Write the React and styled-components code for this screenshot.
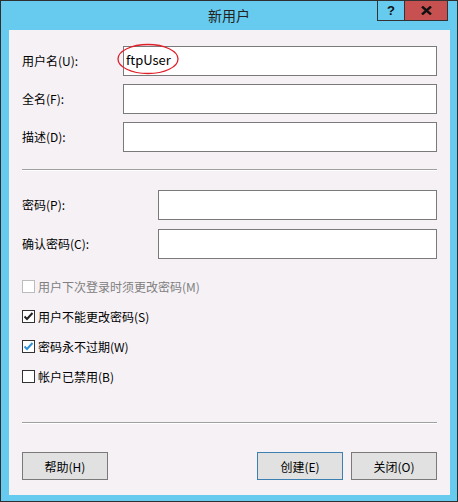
import React from 'react'
import styled, { createGlobalStyle } from 'styled-components'

const GlobalStyle = createGlobalStyle`
  html, body {
    margin: 0;
    padding: 0;
    background: #ffffff;
  }
  body {
    font-family: "Noto Sans CJK SC", "Liberation Sans", sans-serif;
  }
`

const Window = styled.div`
  width: 458px;
  height: 502px;
  box-sizing: border-box;
  border: 1px solid #2f2f2f;
  background: #66cbee;
  display: flex;
  flex-direction: column;
  font-family: "Noto Sans CJK SC", "Liberation Sans", sans-serif;
`

const TitleBar = styled.div`
  height: 29px;
  display: grid;
  grid-template-columns: 1fr auto 1fr;
  align-items: start;
`

const Title = styled.div`
  grid-column: 2;
  font-size: 14px;
  line-height: 29px;
  color: #222;
`

const CaptionButtons = styled.div`
  grid-column: 3;
  justify-self: end;
  display: flex;
  margin-right: 9px;
  margin-top: -1px;
`

const CaptionButton = styled.div`
  width: ${p => (p.$close ? '43px' : '28px')};
  height: 21px;
  box-sizing: border-box;
  border: 1px solid #333;
  border-left-width: ${p => (p.$close ? '0' : '1px')};
  background: ${p => (p.$close ? '#c75050' : '#66cbee')};
  display: flex;
  align-items: center;
  justify-content: center;
  font-family: "Liberation Sans", sans-serif;
  font-weight: bold;
  font-size: 13px;
  color: #111;
`

const Client = styled.div`
  flex: 1;
  margin: 0 7px 7px 8px;
  background: #f5f1f5;
  padding: 16px 13px 15px 13px;
  display: flex;
  flex-direction: column;
  font-size: 12px;
  color: #000;
`

const FieldGrid = styled.div`
  display: grid;
  grid-template-columns: ${p => p.$labelWidth}px 1fr;
  grid-auto-rows: 30px;
  row-gap: ${p => p.$gap}px;
  align-items: center;
`

const Label = styled.div`
  font-size: 12px;
  line-height: 16px;
`

const FieldWrap = styled.div`
  position: relative;
  height: 30px;
`

const TextBox = styled.input`
  width: 100%;
  height: 30px;
  box-sizing: border-box;
  border: 1px solid #7a7a7a;
  background: #fff;
  padding: 0 0 3px 2px;
  margin: 0;
  font-family: "Noto Sans CJK SC", "Liberation Sans", sans-serif;
  font-size: 13px;
  color: #000;
  outline: none;
`

const Highlight = styled.svg`
  position: absolute;
  left: -6px;
  top: -3px;
  pointer-events: none;
`

const Separator = styled.div`
  height: 0;
  border-top: 1px solid #a0a0a0;
  border-bottom: 1px solid #ffffff;
  margin-top: ${p => p.$top}px;
`

const Section = styled.div`
  margin-top: ${p => p.$top}px;
`

const CheckRow = styled.div`
  height: 30px;
  display: flex;
  align-items: center;
  gap: 3px;
  color: ${p => (p.$disabled ? '#808080' : '#000')};
`

const Box = styled.span`
  width: 13px;
  height: 13px;
  box-sizing: border-box;
  border: 1px solid ${p => (p.$disabled ? '#bcbcbc' : '#333')};
  background: #fff;
  display: flex;
  align-items: center;
  justify-content: center;
`

const ButtonBar = styled.div`
  display: flex;
  gap: 8px;
  margin-top: 28px;
`

const Spacer = styled.div`
  flex: 1;
`

const DialogButton = styled.div`
  width: 86px;
  height: 28px;
  box-sizing: border-box;
  border: 1px solid ${p => (p.$primary ? '#3c7fb1' : '#7a7a7a')};
  background: #e1e1e1;
  display: flex;
  align-items: center;
  justify-content: center;
  font-size: 12px;
  color: #000;
`

const Check = ({ color }) => (
  <svg width="11" height="11" viewBox="0 0 11 11">
    <path d="M1.5 5.5 L4 8 L9.5 2" fill="none" stroke={color} strokeWidth="2" />
  </svg>
)

const CheckBox = ({ label, checked, disabled, color = '#222' }) => (
  <CheckRow $disabled={disabled}>
    <Box $disabled={disabled}>{checked && <Check color={color} />}</Box>
    {label}
  </CheckRow>
)

export default function App() {
  return (
    <>
      <GlobalStyle />
      <Window>
        <TitleBar>
          <Title>新用户</Title>
          <CaptionButtons>
            <CaptionButton>?</CaptionButton>
            <CaptionButton $close>
              <svg width="11" height="9" viewBox="0 0 11 9">
                <path d="M1 0.5 L10 8.5 M10 0.5 L1 8.5" stroke="#111" strokeWidth="2.4" />
              </svg>
            </CaptionButton>
          </CaptionButtons>
        </TitleBar>
        <Client>
          <FieldGrid $labelWidth={101} $gap={8}>
            <Label>用户名(U):</Label>
            <FieldWrap>
              <TextBox defaultValue="ftpUser" readOnly />
              <Highlight width="62" height="32" viewBox="0 0 62 32">
                <ellipse cx="31" cy="16" rx="30" ry="14.5" fill="none" stroke="#e0202a" strokeWidth="1.3" />
              </Highlight>
            </FieldWrap>
            <Label>全名(F):</Label>
            <TextBox readOnly />
            <Label>描述(D):</Label>
            <TextBox readOnly />
          </FieldGrid>
          <Separator $top={17} />
          <Section $top={19}>
            <FieldGrid $labelWidth={136} $gap={9}>
              <Label>密码(P):</Label>
              <TextBox type="password" readOnly />
              <Label>确认密码(C):</Label>
              <TextBox type="password" readOnly />
            </FieldGrid>
          </Section>
          <Section $top={12}>
            <CheckBox label="用户下次登录时须更改密码(M)" disabled />
            <CheckBox label="用户不能更改密码(S)" checked />
            <CheckBox label="密码永不过期(W)" checked color="#3090d8" />
            <CheckBox label="帐户已禁用(B)" />
          </Section>
          <Separator $top={31} />
          <ButtonBar>
            <DialogButton>帮助(H)</DialogButton>
            <Spacer />
            <DialogButton $primary>创建(E)</DialogButton>
            <DialogButton>关闭(O)</DialogButton>
          </ButtonBar>
        </Client>
      </Window>
    </>
  )
}
